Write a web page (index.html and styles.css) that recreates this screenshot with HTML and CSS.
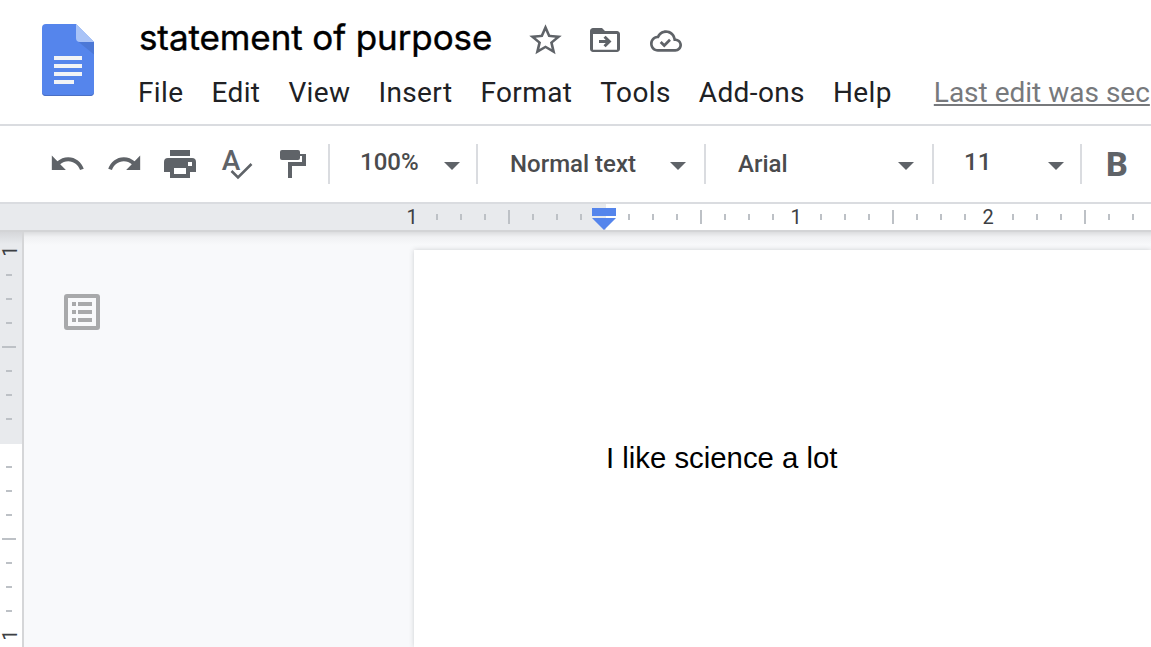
FILE: index.html
```html
<!DOCTYPE html>
<html lang="en">
<head>
  <meta charset="UTF-8">
  <title>statement of purpose</title>
  <link rel="stylesheet" href="styles.css">
</head>
<body>
  <header class="header">
    <svg class="logo" width="52" height="72" viewBox="0 0 52 72">
      <path d="M4 0h30l18 18v50a4 4 0 0 1-4 4H4a4 4 0 0 1-4-4V4a4 4 0 0 1 4-4z" fill="#5585ec"/>
      <path d="M36 17.500l16 13V18z" fill="#4c78d6"/>
      <path d="M34 0l18 18H38a4 4 0 0 1-4-4z" fill="#a9c3f7"/>
      <path d="M0 67.500a4 4 0 0 0 4 3.500h44a4 4 0 0 0 4-3.500v.500a4 4 0 0 1-4 4H4a4 4 0 0 1-4-4z" fill="#4a6fc4"/>
      <path d="M12 32h28v4H12zM12 40h28v4H12zM12 48h28v4H12zM12 56h20v4H12z" fill="#f1f3f6"/>
    </svg>
    <div class="header-main">
      <div class="title-row">
        <h1 class="title">statement of purpose</h1>
        <svg class="icon star" width="39" height="38" viewBox="0 0 24 24" preserveAspectRatio="none">
          <path d="M22 9.240l-7.190-.620L12 2 9.190 8.630 2 9.240l5.460 4.730L5.820 21 12 17.270 18.180 21l-1.630-7.030L22 9.240zM12 15.400l-3.760 2.270 1-4.280-3.320-2.880 4.380-.380L12 6.100l1.710 4.040 4.380.380-3.320 2.880 1 4.280L12 15.400z"/>
        </svg>
        <svg class="icon folder" width="36" height="36" viewBox="0 0 24 24">
          <path d="M20 6h-8l-2-2H4c-1.100 0-2 .900-2 2v12c0 1.100.900 2 2 2h16c1.100 0 2-.900 2-2V8c0-1.100-.900-2-2-2zm0 12.500H4V8h16v10.500z"/>
          <path d="M8 13h6.500M11.700 9.800l3.200 3.200-3.200 3.200" class="line"/>
        </svg>
        <svg class="icon cloud" width="32" height="32" viewBox="0 0 24 24">
          <path d="M19.350 10.040C18.670 6.590 15.640 4 12 4 9.110 4 6.600 5.640 5.350 8.040 2.340 8.360 0 10.910 0 14c0 3.310 2.690 6 6 6h13c2.760 0 5-2.240 5-5 0-2.640-2.050-4.780-4.650-4.960zM19 18H6c-2.210 0-4-1.790-4-4 0-2.050 1.530-3.760 3.560-3.970l1.070-.110.500-.950C8.080 7.140 9.940 6 12 6c2.620 0 4.880 1.860 5.390 4.430l.300 1.500 1.530.110c1.560.100 2.780 1.410 2.780 2.960 0 1.650-1.350 3-3 3z"/>
          <path d="M8 12.700l2.700 2.700 4.300-4.300" class="line"/>
        </svg>
      </div>
      <nav class="menu">
        <span>File</span>
        <span>Edit</span>
        <span>View</span>
        <span>Insert</span>
        <span>Format</span>
        <span>Tools</span>
        <span>Add-ons</span>
        <span>Help</span>
        <a class="last-edit">Last edit was sec</a>
      </nav>
    </div>
  </header>

  <div class="toolbar">
    <div class="tools">
      <svg class="icon" width="36" height="36" viewBox="0 0 36 36">
        <path transform="translate(-1.300 -1.600) scale(1.560 1.600)" d="M12.500 8c-2.650 0-5.050.990-6.900 2.600L2 7v9h9l-3.620-3.620c1.390-1.160 3.160-1.880 5.120-1.880 3.540 0 6.550 2.310 7.600 5.500l2.370-.780C21.080 11.030 17.150 8 12.500 8z"/>
      </svg>
      <svg class="icon" width="36" height="36" viewBox="0 0 36 36">
        <path transform="translate(37.300 -1.600) scale(-1.560 1.600)" d="M12.500 8c-2.650 0-5.050.990-6.900 2.600L2 7v9h9l-3.620-3.620c1.390-1.160 3.160-1.880 5.120-1.880 3.540 0 6.550 2.310 7.600 5.500l2.370-.780C21.080 11.030 17.150 8 12.500 8z"/>
      </svg>
      <svg class="icon" width="36" height="36" viewBox="0 0 36 36">
        <path fill-rule="evenodd" d="M8 4h20v6H8zM6 12h24a4 4 0 0 1 4 4v10h-6v6H8v-6H2V16a4 4 0 0 1 4-4zM12 22v6h12v-6zM26 16v4h4v-4z"/>
      </svg>
      <svg class="icon" width="36" height="36" viewBox="0 0 36 36">
        <text class="icon-letter" x="3.800" y="24">A</text>
        <path d="M13.500 25l6.500 6.500L33.500 18" stroke="#fff" stroke-width="5.500" fill="none"/>
        <path d="M13.500 25l6.500 6.500L33.500 18" stroke="#5f6368" stroke-width="2.600" fill="none"/>
      </svg>
      <svg class="icon" width="36" height="36" viewBox="0 0 36 36">
        <path d="M8 4h16a2 2 0 0 1 2 2v6a2 2 0 0 1-2 2H8a2 2 0 0 1-2-2V6a2 2 0 0 1 2-2z"/>
        <path d="M26 8h6v12H18v12h-4V16h14v-6h-2z"/>
      </svg>
    </div>
    <div class="select zoom raised"><span>100%</span><i class="caret"></i></div>
    <div class="select style"><span>Normal text</span><i class="caret"></i></div>
    <div class="select font"><span>Arial</span><i class="caret"></i></div>
    <div class="select size raised"><span>11</span><i class="caret"></i></div>
    <div class="bold">B</div>
  </div>

  <div class="ruler">
    <div class="ticks" id="hTicks"></div>
    <svg class="marker" width="24" height="22" viewBox="0 0 24 22">
      <path d="M0 0h24v8H0zM0 10h24L12 22z" fill="#5585ec"/>
    </svg>
  </div>

  <main class="workspace">
    <div class="v-ruler">
      <div class="v-ticks" id="vTicks"></div>
    </div>
    <aside class="outline">
      <svg width="36" height="36" viewBox="0 0 36 36" fill="#a8a9ab">
        <path fill-rule="evenodd" d="M3 0h30a3 3 0 0 1 3 3v30a3 3 0 0 1-3 3H3a3 3 0 0 1-3-3V3a3 3 0 0 1 3-3zM4 4v28h28V4z"/>
        <path d="M8 8h4v4H8zM14 8h14v4H14zM8 16h4v4H8zM14 16h14v4H14zM8 24h4v4H8zM14 24h14v4H14z"/>
      </svg>
    </aside>
    <section class="page">
      <p>I like science a lot</p>
    </section>
  </main>

  <script>
    // one cell per 1/8 inch, numbers on whole inches, long tick on halves
    function drawTicks(id, count) {
      const box = document.getElementById(id);
      for (let i = 0; i < count; i++) {
        const tick = document.createElement('span');
        if (i % 8 === 0) {
          tick.className = 'num';
          tick.textContent = i === 8 ? '' : Math.abs(i / 8 - 1);
        } else {
          tick.className = i % 8 === 4 ? 'tick half' : 'tick';
        }
        box.appendChild(tick);
      }
    }
    drawTicks('hTicks', 31);
    drawTicks('vTicks', 17);
  </script>
</body>
</html>
```

FILE: styles.css
```css
* {
  box-sizing: border-box;
}
body {
  margin: 0;
  height: 647px;
  overflow: hidden;
  display: flex;
  flex-direction: column;
  background: #fff;
  font-family: Roboto, "Liberation Sans", sans-serif;
  color: #202124;
}
svg {
  display: block;
  flex: none;
}
.header {
  height: 126px;
  flex: none;
  display: flex;
  align-items: flex-start;
  border-bottom: 2px solid #dadce0;
}
.logo {
  margin: 24px 44px 0 42px;
}
.title-row {
  height: 73px;
  display: flex;
  align-items: flex-start;
}
.title {
  width: 388px;
  margin: 13px 0 0 1px;
  font: 400 35px/48px Inter, sans-serif;
  letter-spacing: -0.1px;
  white-space: nowrap;
  color: #000;
  -webkit-text-stroke: 0.4px #000;
}
.icon {
  fill: #5f6368;
}
.icon .line {
  fill: none;
  stroke: #5f6368;
  stroke-width: 2;
}
.star {
  margin-top: 21px;
  margin-left: -1px;
}
.folder {
  margin: 22px 27px 0 22px;
}
.cloud {
  margin-top: 25px;
}
.menu {
  display: flex;
  gap: 28px;
  font-size: 28px;
  line-height: 40px;
  letter-spacing: 0.38px;
  white-space: nowrap;
}
.last-edit {
  margin-left: 14px;
  letter-spacing: 0;
  color: #77797c;
  text-decoration: underline;
  text-decoration-thickness: 2px;
  text-underline-offset: 2px;
}
.toolbar {
  height: 78px;
  flex: none;
  display: flex;
  align-items: center;
  border-bottom: 2px solid #dadce0;
}
.tools {
  width: 328px;
  padding-left: 50px;
  display: flex;
  gap: 20px;
}
.icon-letter {
  font: 500 28px Roboto, sans-serif;
}
.select {
  height: 40px;
  display: flex;
  align-items: center;
  justify-content: space-between;
  border-left: 2px solid #dadce0;
  padding: 0 18px 0 32px;
  font-size: 24px;
  font-weight: 500;
  color: #4a4b4d;
}
.raised {
  padding: 0 16px 0 30px;
}
.raised span {
  padding-bottom: 4px;
}
.caret {
  border: 8px solid transparent;
  border-top-color: #5f6368;
  border-bottom: 0;
  margin-top: 4px;
}
.zoom {
  width: 148px;
}
.style,
.font {
  width: 228px;
}
.size {
  width: 148px;
}
.bold {
  border-left: 2px solid #dadce0;
  height: 40px;
  padding-left: 24px;
  font-size: 34px;
  line-height: 40px;
  font-weight: 800;
  color: #5f6368;
}
.ruler {
  position: relative;
  height: 28px;
  flex: none;
  border-bottom: 2px solid #d3d4d6;
  background: linear-gradient(to right, #e8eaed 606px, #fff 606px);
}
.ticks {
  display: flex;
  height: 26px;
  padding-left: 401px;
}
.ticks span {
  flex: none;
  width: 24px;
  display: flex;
  align-items: center;
  justify-content: center;
}
.ticks .num {
  padding-right: 2px;
}
.num {
  font-size: 20px;
  color: #3c4043;
}
.tick::before {
  content: "";
  width: 2px;
  height: 6px;
  background: #bdc1c6;
}
.half::before {
  height: 14px;
}
.marker {
  position: absolute;
  left: 592px;
  top: 4px;
}
.workspace {
  flex: 1;
  min-height: 0;
  display: flex;
  background: linear-gradient(#dcdddf, #f0f1f3 5px, #f8f9fb 13px);
}
.v-ruler {
  width: 24px;
  overflow: hidden;
  border-right: 2px solid #d5d6d8;
  background: linear-gradient(#d6d7da, #e8eaed 12px, #e8eaed 212px, #fff 212px);
}
.v-ticks {
  padding-top: 7px;
}
.v-ticks span {
  width: 18px;
  height: 24px;
  display: flex;
  align-items: center;
  justify-content: center;
}
.v-ticks .num {
  width: 20px;
  transform: rotate(-90deg);
}
.v-ticks .tick::before {
  width: 6px;
  height: 2px;
}
.v-ticks .half::before {
  width: 14px;
}
.outline {
  width: 390px;
  padding: 62px 0 0 40px;
}
.page {
  flex: 1;
  margin-top: 18px;
  padding: 190px 0 0 192px;
  background: #fff;
  box-shadow: 0 0 5px rgba(60, 64, 67, 0.22);
}
.page p {
  margin: 0;
  font: 29.33px/36px "Liberation Sans", Arial, sans-serif;
  white-space: nowrap;
  color: #000;
}
```
